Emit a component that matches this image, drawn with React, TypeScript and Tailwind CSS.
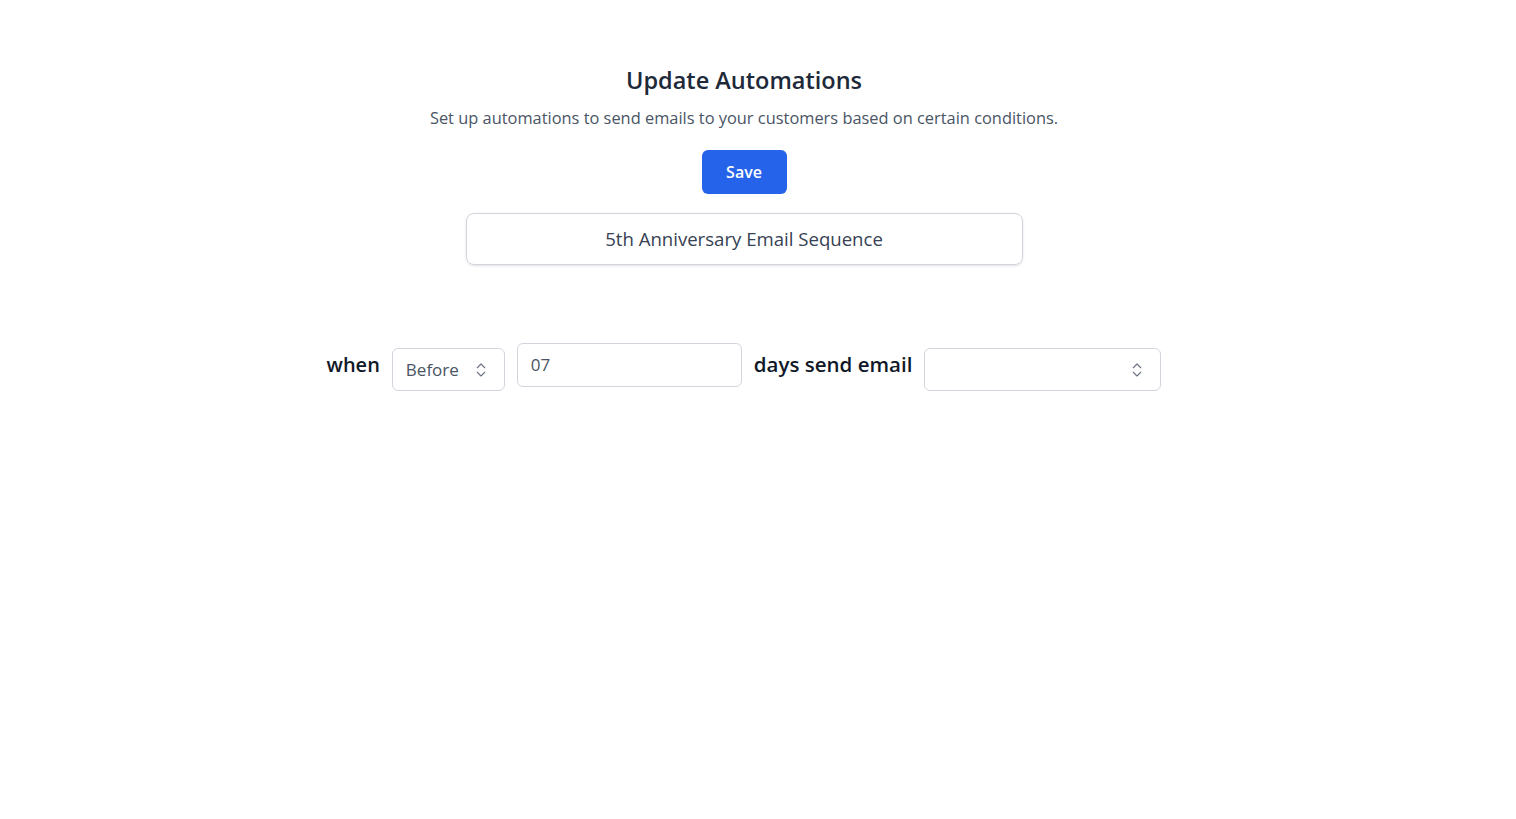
import { ChevronsUpDown } from 'lucide-react';

function SelectBox({ value, width }: { value: string; width: string }) {
  return (
    <div
      className={`${width} mt-[5px] h-[43px] shrink-0 rounded-md border border-gray-300 bg-white flex items-center justify-between pl-[13px] pr-[14px] text-[17px] text-gray-600`}
    >
      <span>{value}</span>
      <ChevronsUpDown size={18} strokeWidth={1.5} className="text-gray-500" />
    </div>
  );
}

export default function App() {
  return (
    <div className="min-h-screen bg-white font-['Open_Sans',sans-serif] text-gray-900">
      <div className="w-[1488px] flex flex-col items-center pt-[62px]">
        <h1 className="text-[23.5px] leading-[36px] font-semibold text-gray-800">Update Automations</h1>
        <p className="mt-[8px] text-[16.4px] leading-[24px] text-gray-600">
          Set up automations to send emails to your customers based on certain conditions.
        </p>
        <button className="mt-[20px] w-[85px] h-[44px] rounded-md bg-[#2563eb] text-white text-[16px] font-semibold">
          Save
        </button>
        <div className="mt-[19px] w-[557px] h-[52px] rounded-lg border border-gray-300 shadow-sm flex items-center justify-center text-[18.6px] text-gray-700">
          5th Anniversary Email Sequence
        </div>

        <div className="mt-[78px] flex items-start gap-3">
          <span className="h-[43px] flex items-center text-[20px] font-semibold text-gray-900">when</span>
          <SelectBox value="Before" width="w-[113px]" />
          <div className="w-[225px] h-[44px] rounded-md border border-gray-300 flex items-center px-[13px] text-[17px] text-gray-600">
            07
          </div>
          <span className="h-[43px] flex items-center text-[20.5px] font-semibold text-gray-900">days send email</span>
          <SelectBox value="" width="w-[237px]" />
        </div>
      </div>
    </div>
  );
}
